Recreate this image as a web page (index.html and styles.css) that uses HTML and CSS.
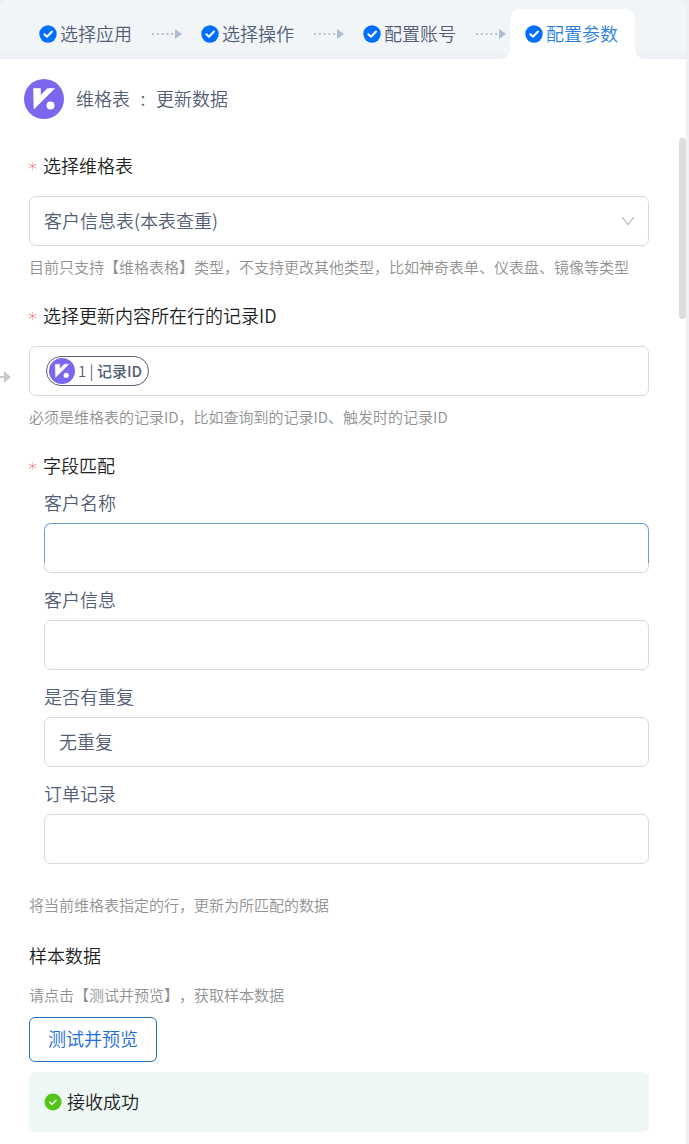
FILE: index.html
```html
<!DOCTYPE html>
<html lang="zh-CN">
<head>
<meta charset="utf-8">
<meta name="viewport" content="width=device-width, initial-scale=1">
<title>配置参数</title>
<link rel="stylesheet" href="styles.css">
</head>
<body>
<svg class="defs" aria-hidden="true">
  <symbol id="check" viewBox="0 0 18 18"><circle cx="9" cy="9" r="8.7" fill="currentColor"/><path d="M5.3 9.2l2.7 2.6 5-5.3" fill="none" stroke="#fff" stroke-width="2" stroke-linecap="round" stroke-linejoin="round"/></symbol>
  <symbol id="thin-check" viewBox="0 0 18 18"><circle cx="9" cy="9" r="8.5" fill="currentColor"/><path d="M5.5 8.8l2.5 2.8 4.4-4.9" fill="none" stroke="#fff" stroke-width="1.3"/></symbol>
  <symbol id="dots" viewBox="0 0 30 10"><path d="M0 5h22" stroke="#b6c2d6" stroke-width="2" stroke-dasharray="2 2.8"/><path d="M23 0l7 5-7 5z" fill="#b0bdd2"/></symbol>
  <symbol id="brand" viewBox="0 0 40 40"><circle cx="20" cy="20" r="20" fill="#7b67ee"/><path d="M9.500 9.500h7v7L23.500 9.500h7L10 30z" fill="#fff" stroke="#fff" stroke-width=".6" stroke-linejoin="round"/><circle cx="26.500" cy="26.500" r="4" fill="#fff"/></symbol>
</svg>
<main class="panel">
  <nav class="steps">
    <a class="step" href="#app"><svg class="icon"><use href="#check"/></svg><span>选择应用</span></a>
    <svg class="link"><use href="#dots"/></svg>
    <a class="step" href="#action"><svg class="icon"><use href="#check"/></svg><span>选择操作</span></a>
    <svg class="link"><use href="#dots"/></svg>
    <a class="step" href="#account"><svg class="icon"><use href="#check"/></svg><span>配置账号</span></a>
    <svg class="link"><use href="#dots"/></svg>
    <a class="step active" href="#params" aria-current="step"><svg class="icon"><use href="#check"/></svg><span>配置参数</span></a>
  </nav>
  <header class="brand">
    <svg class="logo"><use href="#brand"/></svg>
    <span>维格表</span><span class="colon">:</span><span>更新数据</span>
  </header>
  <form class="form">
    <section class="group">
      <label class="title" for="sheet"><span class="star">∗</span>选择维格表</label>
      <div class="select-wrap">
        <select class="box" id="sheet"><option>客户信息表(本表查重)</option></select>
        <svg class="chevron" viewBox="0 0 14 10"><path d="M1 1l6 7.500L13 1" fill="none" stroke="#b5b5b5" stroke-width="1.200"/></svg>
      </div>
      <p class="help">目前只支持【维格表格】类型，不支持更改其他类型，比如神奇表单、仪表盘、镜像等类型</p>
    </section>
    <section class="group">
      <label class="title" for="record"><span class="star">∗</span>选择更新内容所在行的记录ID</label>
      <div class="box token-box">
        <span class="chip"><svg class="chip-logo"><use href="#brand"/></svg><span>1 | <b>记录ID</b></span></span>
        <input class="bare" id="record" type="text">
      </div>
      <p class="help">必须是维格表的记录ID，比如查询到的记录ID、触发时的记录ID</p>
    </section>
    <section class="group match">
      <h2 class="title"><span class="star">∗</span>字段匹配</h2>
      <div class="fields">
        <div class="field"><label for="name">客户名称</label><input class="box current" id="name" type="text"></div>
        <div class="field"><label for="info">客户信息</label><input class="box" id="info" type="text"></div>
        <div class="field"><label for="dup">是否有重复</label><input class="box" id="dup" type="text" value="无重复"></div>
        <div class="field"><label for="order">订单记录</label><input class="box" id="order" type="text"></div>
      </div>
      <p class="help">将当前维格表指定的行，更新为所匹配的数据</p>
    </section>
    <section class="sample">
      <h2 class="title">样本数据</h2>
      <p class="help">请点击【测试并预览】，获取样本数据</p>
      <button class="test" type="button">测试并预览</button>
      <div class="result" role="status"><svg class="icon"><use href="#thin-check"/></svg><span>接收成功</span></div>
    </section>
  </form>
  <svg class="edge-arrow" viewBox="0 0 11 12"><path d="M0 6h5" stroke="#c9c9c9" stroke-width="2"/><path d="M4 0l7 6-7 6z" fill="#c9c9c9"/></svg>
  <div class="thumb"></div>
</main>
</body>
</html>
```
FILE: styles.css
```css
* { box-sizing: border-box; }
body {
  margin: 0;
  padding-right: 3px;
  background: #eff0f3;
  color: #525d76;
  font: 350 18px/30px "Noto Sans CJK SC", sans-serif;
  text-spacing-trim: space-all;
}
h2, p { margin: 0; font-weight: inherit; font-size: inherit; }
input, select, button { font: inherit; color: inherit; }
.defs { position: absolute; width: 0; height: 0; }
.panel {
  position: relative;
  min-height: 100vh;
  overflow: hidden;
  background: #fff;
  border-radius: 10px 10px 0 0;
}
.steps {
  display: flex;
  align-items: flex-end;
  height: 59px;
  padding-left: 24px;
  background: linear-gradient(#f2f5f8 50px, #ebeff3);
}
.step {
  position: relative;
  display: flex;
  align-items: center;
  gap: 3px;
  height: 50px;
  padding: 0 17px 0 15px;
  color: inherit;
  text-decoration: none;
  white-space: nowrap;
}
.step span, .brand span, .result span { padding-bottom: 3px; }
.step .icon { color: #006eff; }
.active { background: #fff; color: #2a7fe0; border-radius: 10px 10px 0 0; }
.active::before, .active::after {
  content: "";
  position: absolute;
  bottom: 0;
  width: 10px;
  height: 10px;
}
.active::before { right: 100%; background: radial-gradient(circle at 0 0, transparent 10px, #fff 10px); }
.active::after { left: 100%; background: radial-gradient(circle at 100% 0, transparent 10px, #fff 10px); }
.icon { flex: none; width: 18px; height: 18px; }
.link { flex: none; width: 30px; height: 10px; margin: 0 4px 20px 3px; }
.brand { display: flex; align-items: center; padding: 20px 24px 0; }
.logo { width: 40px; height: 40px; margin-right: 12px; }
.colon { width: 26px; text-align: center; }
.form { padding: 31px 37px 12px 29px; }
.group { margin-bottom: 18px; }
.title { display: flex; margin-bottom: 16px; color: #1d1f24; }
.star { width: 14px; color: #f0545a; font-family: "DejaVu Sans", sans-serif; font-size: 18px; line-height: 32px; height: 30px; text-indent: -2px; }
.box {
  display: block;
  width: 100%;
  height: 50px;
  padding: 0 14px 3px;
  background: #fff;
  border: 1px solid #d9d9d9;
  border-radius: 7px;
  outline: none;
}
.select-wrap { position: relative; }
select.box { appearance: none; }
.chevron { position: absolute; right: 14px; top: 20px; width: 14px; height: 10px; pointer-events: none; }
.help { margin-top: 6px; color: #919191; font-size: 15px; }
.token-box { display: flex; align-items: center; gap: 8px; padding: 0 14px 0 16px; }
.chip {
  display: flex;
  align-items: center;
  gap: 3px;
  height: 30px;
  padding: 0 6px 0 2px;
  border: 1px solid #566178;
  border-radius: 15px;
  font-size: 15px;
  white-space: nowrap;
}
.chip b { font-weight: 500; }
.chip-logo { width: 26px; height: 26px; }
.bare { flex: 1; min-width: 0; border: 0; outline: 0; background: none; }
.match .title { margin-bottom: 7px; }
.fields { display: grid; gap: 12px; padding-left: 15px; }
.field label { display: block; margin-bottom: 6px; }
.field + .field { margin-top: -1px; }
.current {
  border-color: transparent;
  background: linear-gradient(#fff, #fff) padding-box, linear-gradient(#6a9fd4 40px, #d9d9d9 40px) border-box;
}
.match .help { margin-top: 26px; }
.sample .title { margin: 20px 0 10px; }
.sample .help { margin: 0 0 7px; }
.test {
  height: 45px;
  padding: 0 18px 3px;
  background: #fff;
  color: #1c6bdc;
  border: 1px solid #2572bd;
  border-radius: 6px;
}
.test, .result { display: flex; align-items: center; }
.result {
  gap: 5px;
  height: 60px;
  margin-top: 10px;
  padding: 0 15px;
  background: #edf8f5;
  border-radius: 7px;
  color: #1d1f24;
}
.result .icon { color: #52c41a; }
.edge-arrow { position: absolute; left: 0; top: 371px; width: 11px; height: 12px; }
.thumb { position: absolute; right: 0; top: 138px; width: 7px; height: 181px; border-radius: 4px; background: #dcdcdc; }
```
